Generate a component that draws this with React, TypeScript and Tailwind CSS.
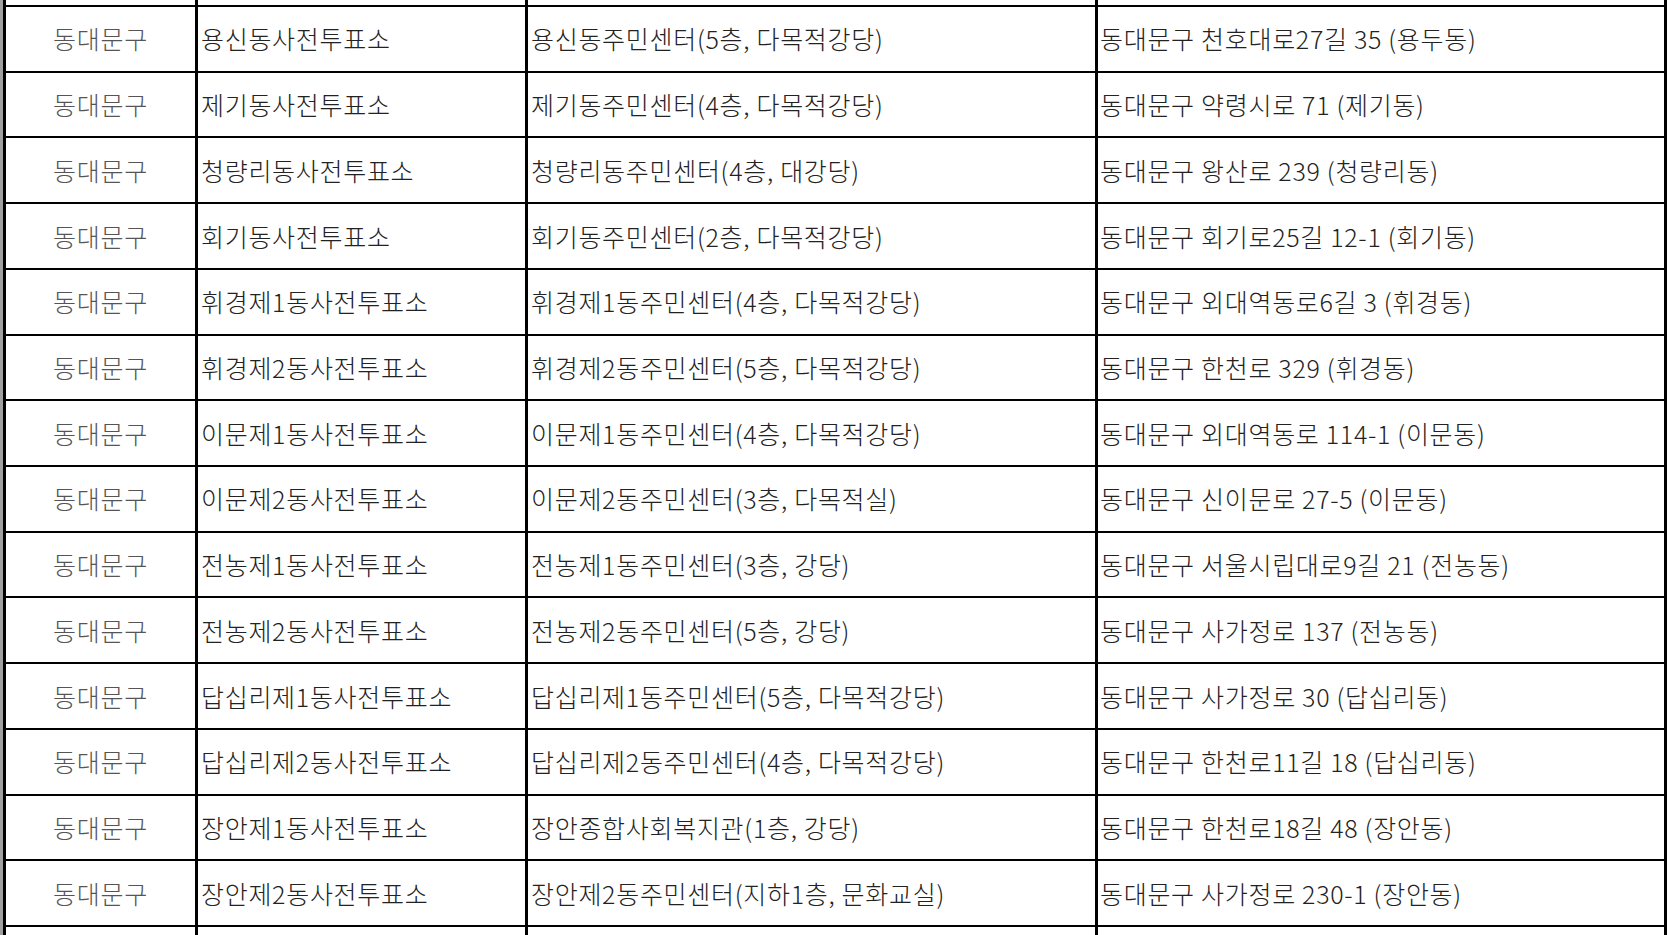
import React from 'react';

type Place = {
  gu: string;
  name: string;
  location: string;
  address: string;
};

const places: Place[] = [
  { gu: '동대문구', name: '용신동사전투표소', location: '용신동주민센터(5층, 다목적강당)', address: '동대문구 천호대로27길 35 (용두동)' },
  { gu: '동대문구', name: '제기동사전투표소', location: '제기동주민센터(4층, 다목적강당)', address: '동대문구 약령시로 71 (제기동)' },
  { gu: '동대문구', name: '청량리동사전투표소', location: '청량리동주민센터(4층, 대강당)', address: '동대문구 왕산로 239 (청량리동)' },
  { gu: '동대문구', name: '회기동사전투표소', location: '회기동주민센터(2층, 다목적강당)', address: '동대문구 회기로25길 12-1 (회기동)' },
  { gu: '동대문구', name: '휘경제1동사전투표소', location: '휘경제1동주민센터(4층, 다목적강당)', address: '동대문구 외대역동로6길 3 (휘경동)' },
  { gu: '동대문구', name: '휘경제2동사전투표소', location: '휘경제2동주민센터(5층, 다목적강당)', address: '동대문구 한천로 329 (휘경동)' },
  { gu: '동대문구', name: '이문제1동사전투표소', location: '이문제1동주민센터(4층, 다목적강당)', address: '동대문구 외대역동로 114-1 (이문동)' },
  { gu: '동대문구', name: '이문제2동사전투표소', location: '이문제2동주민센터(3층, 다목적실)', address: '동대문구 신이문로 27-5 (이문동)' },
  { gu: '동대문구', name: '전농제1동사전투표소', location: '전농제1동주민센터(3층, 강당)', address: '동대문구 서울시립대로9길 21 (전농동)' },
  { gu: '동대문구', name: '전농제2동사전투표소', location: '전농제2동주민센터(5층, 강당)', address: '동대문구 사가정로 137 (전농동)' },
  { gu: '동대문구', name: '답십리제1동사전투표소', location: '답십리제1동주민센터(5층, 다목적강당)', address: '동대문구 사가정로 30 (답십리동)' },
  { gu: '동대문구', name: '답십리제2동사전투표소', location: '답십리제2동주민센터(4층, 다목적강당)', address: '동대문구 한천로11길 18 (답십리동)' },
  { gu: '동대문구', name: '장안제1동사전투표소', location: '장안종합사회복지관(1층, 강당)', address: '동대문구 한천로18길 48 (장안동)' },
  { gu: '동대문구', name: '장안제2동사전투표소', location: '장안제2동주민센터(지하1층, 문화교실)', address: '동대문구 사가정로 230-1 (장안동)' },
];

// column widths include the 3px left rule of each cell
const Row: React.FC<{ place?: Place; height: string; top?: boolean }> = ({ place, height, top = true }) => (
  <div className={`flex ${height} ${top ? 'border-t-2 border-black' : ''}`}>
    <div className="w-[192px] shrink-0 border-l-[3px] border-black flex items-center justify-center text-[#555]">
      {place?.gu}
    </div>
    <div className="w-[330px] shrink-0 border-l-[3px] border-black flex items-center pl-[3px] whitespace-nowrap">
      {place?.name}
    </div>
    <div className="w-[570px] shrink-0 border-l-[3px] border-black flex items-center pl-[3px] whitespace-nowrap">
      {place?.location}
    </div>
    <div className="w-[572px] shrink-0 border-x-[3px] border-black flex items-center pl-[2px] whitespace-nowrap">
      {place?.address}
    </div>
  </div>
);

const App: React.FC = () => {
  return (
    <div
      className="w-[1672px] h-[935px] overflow-hidden bg-white flex text-[25px] font-light tracking-[0.7px] leading-none text-[#222]"
      style={{ fontFamily: '"Noto Sans CJK KR", "Noto Sans", sans-serif' }}
    >
      {/* gray window edge */}
      <div className="w-[3px] shrink-0 bg-[#a0a0a0]" />

      <div className="flex flex-col">
        <Row height="h-[5px]" top={false} />
        {places.map((p) => (
          <Row key={p.name} place={p} height="h-[66px]" />
        ))}
        <Row height="h-[10px]" />
      </div>
    </div>
  );
};

export default App;
